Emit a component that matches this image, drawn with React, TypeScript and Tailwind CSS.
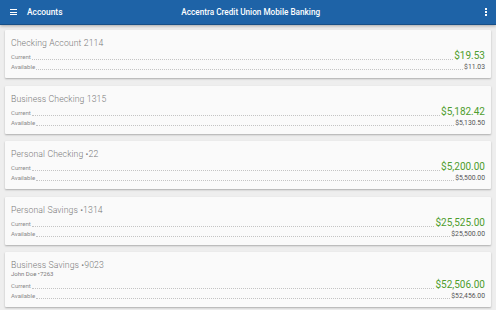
import React from "react";

type Acct = { name: string; sub?: string; current: string; available: string };

const accounts: Acct[] = [
  { name: "Checking Account 2114", current: "$19.53", available: "$11.03" },
  { name: "Business Checking 1315", current: "$5,182.42", available: "$5,130.50" },
  { name: "Personal Checking \u202222", current: "$5,200.00", available: "$5,500.00" },
  { name: "Personal Savings \u20221314", current: "$25,525.00", available: "$25,500.00" },
  { name: "Business Savings \u20229023", sub: "John Doe \u20227263", current: "$52,506.00", available: "$52,456.00" },
];

function Card({ a }: { a: Acct }) {
  return (
    <div className={"bg-[#fafafa] rounded-[1px] shadow-[0_1px_2px_rgba(0,0,0,0.28)] px-[6px] pt-[7px] flex flex-col " + (a.sub ? "h-[55px]" : "h-[48px]")}>
      <div className="text-[8.7px] leading-[12px] text-[#7a7a7a] font-light tracking-[0.1px]">{a.name}</div>
      {a.sub && <div className="text-[6px] leading-[8px] mt-[-1px] text-[#7a7a7a]">{a.sub}</div>}
      <div className="mt-[1px] flex items-baseline h-[12px]">
        <span className="text-[6px] leading-[12px] text-[#8a8a8a]">Current</span>
        <div className="flex-1 h-0 border-b border-dotted border-[#c4c4c4] mx-[1px] translate-y-[1px]"></div>
        <span className="text-[10px] leading-[12px] text-[#4e9d2d]">{a.current}</span>
      </div>
      <div className="flex items-baseline h-[10px]">
        <span className="text-[6px] leading-[10px] text-[#8a8a8a]">Available</span>
        <div className="flex-1 h-0 border-b border-dotted border-[#c4c4c4] mx-[1px] translate-y-[1px]"></div>
        <span className="text-[6.8px] leading-[10px] text-[#555555]">{a.available}</span>
      </div>
    </div>
  );
}

export default function App() {
  return (
    <div className="w-[496px] h-[310px] overflow-hidden bg-[#eeeeee] flex flex-col" style={{ fontFamily: "Roboto, 'Liberation Sans', sans-serif" }}>
      <div className="h-[25px] shrink-0 bg-[#1e63a7] border-b border-[#174f87] shadow-[0_1px_3px_rgba(0,0,0,0.3)] flex items-center px-[10px] text-white relative z-10">
        <div className="flex flex-col gap-[1.5px] w-[7px]">
          <div className="h-[1px] bg-white"></div>
          <div className="h-[1px] bg-white"></div>
          <div className="h-[1px] bg-white"></div>
        </div>
        <div className="ml-[10px] text-[8.4px] font-medium">Accounts</div>
        <div className="flex-1 text-center text-[8.2px] font-medium pr-[46px]">Accentra Credit Union Mobile Banking</div>
        <div className="flex flex-col gap-[1px] mr-[-1px]">
          <div className="w-[2px] h-[2px] bg-white"></div>
          <div className="w-[2px] h-[2px] bg-white"></div>
          <div className="w-[2px] h-[2px] bg-white"></div>
        </div>
      </div>
      <div className="flex flex-col gap-[7.5px] px-[5px] pt-[5px]">
        {accounts.map((a) => (
          <Card key={a.name} a={a} />
        ))}
      </div>
    </div>
  );
}
